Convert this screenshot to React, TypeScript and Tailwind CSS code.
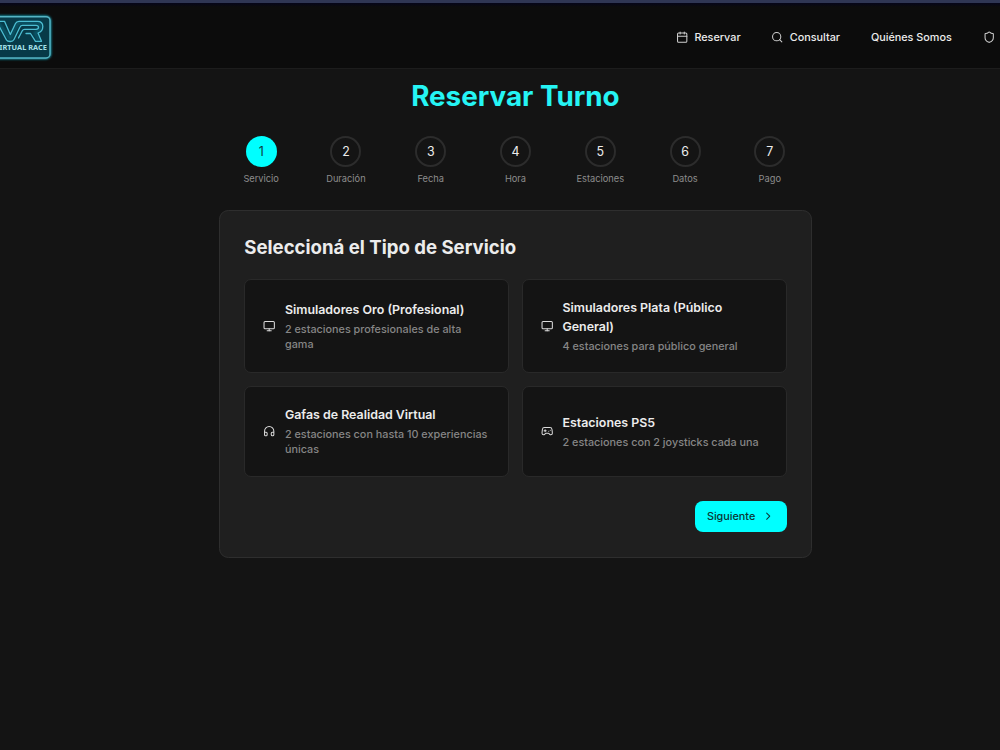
import { Calendar, ChevronRight, Gamepad2, Headphones, Monitor, Search, Shield } from "lucide-react";
import type { LucideIcon } from "lucide-react";

const steps = ["Servicio", "Duración", "Fecha", "Hora", "Estaciones", "Datos", "Pago"];

const services: { icon: LucideIcon; title: string; text: string }[] = [
  { icon: Monitor, title: "Simuladores Oro (Profesional)", text: "2 estaciones profesionales de alta gama" },
  { icon: Monitor, title: "Simuladores Plata (Público General)", text: "4 estaciones para público general" },
  { icon: Headphones, title: "Gafas de Realidad Virtual", text: "2 estaciones con hasta 10 experiencias únicas" },
  { icon: Gamepad2, title: "Estaciones PS5", text: "2 estaciones con 2 joysticks cada una" },
];

function Logo() {
  return (
    <svg className="block h-[50px] w-[60px] shrink-0" viewBox="0 0 60 50" fill="none">
      <defs>
        <filter id="glow" x="-20%" y="-20%" width="140%" height="140%">
          <feGaussianBlur stdDeviation="1.3" />
        </filter>
      </defs>
      <rect x="-20" y="4.700" width="70" height="41.200" rx="4" stroke="#1aa3b8" strokeWidth="2.500" filter="url(#glow)" />
      <rect x="-20" y="4.700" width="70" height="41.200" rx="4" fill="#073a48" stroke="#55b4c3" strokeWidth="1.500" />
      <g strokeLinejoin="round" strokeLinecap="round">
        <path
          d="M-2 10L10 27L18 11H40V18L35 21L38.500 28"
          stroke="#1295ae"
          strokeWidth="3"
          opacity="0.300"
          filter="url(#glow)"
        />
        <g stroke="#4bbdd2" strokeWidth="1.300">
          <path d="M-3 9.300H4.500L10.300 22.500L15.500 11.500Q16.500 9.300 19 9.300H37.500Q42.800 9.300 42.800 14.500Q42.800 19.500 38 21L41.500 29.300H35.500L30.500 21.500H26" />
          <path d="M-1 14L6.500 28Q7.300 29.500 10.300 29.500Q13 29.500 14 27.500L20 15Q20.700 13.300 22.500 13.300H36Q38.500 13.300 38.500 15.300Q38.500 17.300 36 17.300H24.500Q23 17.300 22.300 18.700L18.500 26" />
        </g>
      </g>
      <text x="46.800" y="37.900" textAnchor="end" fill="#a5e0e9" fontFamily="Noto Sans, sans-serif" fontSize="6.900" fontWeight="700" textLength="52" lengthAdjust="spacingAndGlyphs">
        VIRTUAL RACE
      </text>
    </svg>
  );
}

export default function App() {
  return (
    <div className="flex h-[750px] w-[1000px] flex-col overflow-hidden bg-[#141414] font-['Inter',sans-serif] text-[#ececec]">
      <div className="h-[3px] shrink-0 bg-[#2f3654]" />
      <header className="flex h-[66px] shrink-0 items-center justify-between border-b border-[#1d1d1d] bg-[#0c0c0c] bg-[linear-gradient(#05051a,#0c0c0c_4px)]">
        <div className="pt-[3px]">
          <Logo />
        </div>
        <nav className="mr-[5px] flex items-center gap-[30.9px] pt-[3px] text-[10.8px] font-medium">
          <a className="flex items-center gap-[6px]">
            <Calendar className="size-[12.4px] text-[#d0d0d0]" />
            <span className="pt-[1.5px]">Reservar</span>
          </a>
          <a className="flex items-center gap-[6px]">
            <Search className="size-[12.4px] text-[#d0d0d0]" />
            <span className="pt-[1.5px]">Consultar</span>
          </a>
          <a className="pt-[1.5px]">Quiénes Somos</a>
          <a>
            <Shield className="size-[12.4px] text-[#d0d0d0]" />
          </a>
        </nav>
      </header>

      <main className="ml-[218.6px] flex w-[593.6px] flex-col pt-[10px]">
        <h1 className="text-center text-[27.8px]/[34px] font-bold text-[#25f4f4]">Reservar Turno</h1>
        <ol className="ml-[0.2px] mt-[23px] grid grid-cols-7">
          {steps.map((label, i) => (
            <li key={label} className="flex flex-col items-center">
              <span
                className={
                  i === 0
                    ? "flex size-[31px] items-center justify-center rounded-full bg-[#00ffff] pt-[1.5px] text-[12.4px] text-[#0d3b3b]"
                    : "flex size-[31px] items-center justify-center rounded-full border-2 border-[#2c2c2c] pt-[1.5px] text-[12.4px]"
                }
              >
                {i + 1}
              </span>
              <span className="mt-[6px] text-[9.27px]/[12.4px] text-[#8c8c8c]">{label}</span>
            </li>
          ))}
        </ol>

        <section className="mt-[24.6px] h-[348px] rounded-[9.3px] border border-[#2e2e2e] bg-[#1f1f1f] px-[24.7px] pt-[24.2px]">
          <h2 className="text-[18.6px]/[24.7px] font-bold">Seleccioná el Tipo de Servicio</h2>
          <div className="mt-[19.2px] grid grid-cols-2 grid-rows-[94.3px_91.2px] gap-x-[12.9px] gap-y-[12.4px]">
            {services.map(({ icon: Icon, title, text }) => (
              <button
                key={title}
                className="flex items-center gap-[9.3px] rounded-[7px] border border-[#292929] bg-[#141414] px-[18px] text-left"
              >
                <Icon className="size-[12.4px] shrink-0 text-[#dcdcdc]" />
                <span className="flex flex-col pt-px">
                  <span className="text-[12.4px]/[18.5px] font-semibold">{title}</span>
                  <span className="mt-[2.7px] text-[10.82px]/[15.45px] font-medium text-[#868686]">{text}</span>
                </span>
              </button>
            ))}
          </div>
          <div className="mt-6 flex justify-end">
            <button className="flex h-[31px] w-[92px] items-center justify-center gap-[6.4px] rounded-[8px] bg-[#00ffff] text-[10.8px] font-medium text-[#0b3434]">
              <span className="pt-[2px]">Siguiente</span>
              <ChevronRight className="size-[12.4px]" />
            </button>
          </div>
        </section>
      </main>
    </div>
  );
}
